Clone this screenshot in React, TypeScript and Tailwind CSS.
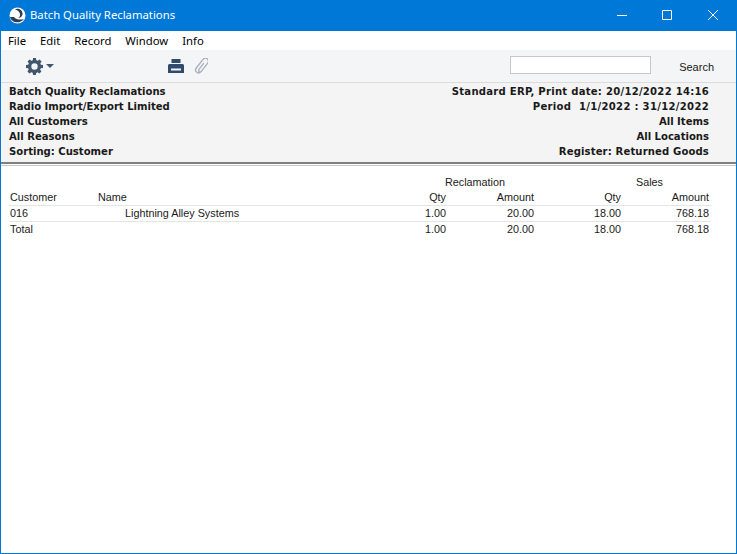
function Logo() {
  return (
    <svg width="17" height="17" viewBox="0 0 17 17">
      <circle cx="8.5" cy="8.5" r="8" fill="#ffffff" />
      <path d="M1 10c1 5 9 8 14 2 -3 1-8 1-10-2z" fill="#2f3d4f" />
      <path d="M6 2.500c4-2 8 1 7.500 5 -.5 2-2 3.500-4.500 3.500 2-1 2.500-3 1.800-4.800 -.8-2-2.800-3.500-4.800-3.700z" fill="#2f3d4f" />
    </svg>
  );
}

function Gear() {
  return (
    <svg width="17" height="17" viewBox="0 0 24 24" fill="#43566d">
      <path
        fillRule="evenodd"
        d="M10 0h4l.6 3.200 1.900.8 2.700-1.800 2.800 2.800-1.800 2.700.8 1.900L24 10v4l-3.200.6-.8 1.900 1.800 2.700-2.800 2.800-2.700-1.800-1.900.8L14 24h-4l-.6-3.200-1.900-.8-2.700 1.800-2.800-2.800 1.800-2.700-.8-1.900L0 14v-4l3.200-.6.8-1.900L2.200 4.800 5 2l2.700 1.800 1.900-.8zM12 7.500a4.500 4.500 0 1 0 0 9 4.500 4.500 0 0 0 0-9z"
      />
    </svg>
  );
}

function Printer() {
  return (
    <svg width="16" height="14" viewBox="0 0 16 14" fill="#2f4a6b">
      <path d="M3.500 0h9v4h-9z" />
      <path fillRule="evenodd" d="M1.500 5h13A1.500 1.500 0 0 1 16 6.500V14H0V6.500A1.500 1.500 0 0 1 1.500 5zM3 9.500v2h10v-2z" />
    </svg>
  );
}

function Clip() {
  return (
    <svg width="14" height="16" viewBox="0 0 14 16" fill="none" stroke="#a6afbd" strokeWidth="1.300" strokeLinecap="round">
      <g transform="rotate(38 7 8)">
        <path d="M7.500 4.500v7.500a1.500 1.500 0 0 0 3 0V1.500a3 3 0 0 0-6 0V12.500a3 3 0 0 0 6 0" />
      </g>
    </svg>
  );
}

function Row({ a, b, c, d, e, f, indent }: { a: string; b?: string; c: string; d: string; e: string; f: string; indent?: boolean }) {
  return (
    <div className="flex h-[16px] leading-[14px] mr-[25px] pr-[2px] border-b border-[#e4e4e4] last:border-b-0">
      <span className="w-[89px] pl-px">{a}</span>
      <span className={`w-[200px] ${indent ? "pl-[27px]" : ""}`}>{b}</span>
      <span className="w-[148px] text-right">{c}</span>
      <span className="w-[88px] text-right">{d}</span>
      <span className="w-[87px] text-right">{e}</span>
      <span className="w-[88px] text-right">{f}</span>
    </div>
  );
}

export default function App() {
  return (
    <div className="w-[737px] h-[554px] flex flex-col bg-white border border-t-0 border-[#0078d7] overflow-hidden text-[10.8px] text-[#1a1a1a] font-['Liberation_Sans',sans-serif]">
      <div className="h-[31px] shrink-0 flex items-center bg-[#0078d7] text-white -mx-px pl-[9px] text-[11.3px] font-['Noto_Sans',sans-serif]">
        <Logo />
        <span className="ml-1 flex-1">Batch Quality Reclamations</span>
        <svg width="101" height="31" viewBox="0 0 101 31" fill="none" stroke="#ffffff" strokeWidth="1">
          <path d="M0 15.500h10M45.500 10.500h9v9h-9zM91 10l10 10M101 10l-10 10" />
        </svg>
        <span className="w-[19px]" />
      </div>
      <div className="h-[19px] shrink-0 flex items-center gap-[14px] pl-[7px] pt-[2px] text-[11.3px] text-black font-['Noto_Sans',sans-serif]">
        <span>File</span>
        <span>Edit</span>
        <span>Record</span>
        <span>Window</span>
        <span>Info</span>
      </div>
      <div className="h-[33px] shrink-0 flex items-center bg-[#f4f5f6] border-b border-[#dcdcdc]">
        <div className="ml-[25px] flex items-center w-[142px]">
          <Gear />
          <svg width="8" height="4" viewBox="0 0 8 4" className="ml-[3px]" fill="#43566d">
            <path d="M0 0h8L4 4z" />
          </svg>
        </div>
        <Printer />
        <span className="ml-[10px]"><Clip /></span>
        <div className="ml-[302px] mb-[2px] w-[141px] h-[18px] bg-white border border-[#c8c8c8]" />
        <span className="ml-auto pr-[22px] pt-[3px] text-[11px]">Search</span>
      </div>
      <div className="h-[81px] shrink-0 flex justify-between bg-[#f4f4f4] pl-[8px] pr-[27px] pt-px text-[11.2px] font-['DejaVu_Sans_Condensed','DejaVu_Sans',sans-serif] font-bold leading-[15px] border-b-2 border-[#808080]">
        <div>
          <div>Batch Quality Reclamations</div>
          <div>Radio Import/Export Limited</div>
          <div>All Customers</div>
          <div>All Reasons</div>
          <div>Sorting: Customer</div>
        </div>
        <div className="text-right">
          <div className="tracking-[0.26px]">Standard ERP, Print date: 20/12/2022 14:16</div>
          <div className="tracking-[0.3px]">Period&nbsp; 1/1/2022 : 31/12/2022</div>
          <div>All Items</div>
          <div>All Locations</div>
          <div className="tracking-[0.14px]">Register: Returned Goods</div>
        </div>
      </div>
      <div className="flex-1 pl-[8px] mt-[1px] border-t border-[#c8c8c8] pt-[8px] leading-[16px]">
        <div className="flex h-4">
          <span className="ml-[436px] w-[59px] text-center">Reclamation</span>
          <span className="ml-[132px]">Sales</span>
        </div>
        <Row a="Customer" b="Name" c="Qty" d="Amount" e="Qty" f="Amount" />
        <Row a="016" b="Lightning Alley Systems" c="1.00" d="20.00" e="18.00" f="768.18" indent />
        <Row a="Total" c="1.00" d="20.00" e="18.00" f="768.18" />
      </div>
    </div>
  );
}
